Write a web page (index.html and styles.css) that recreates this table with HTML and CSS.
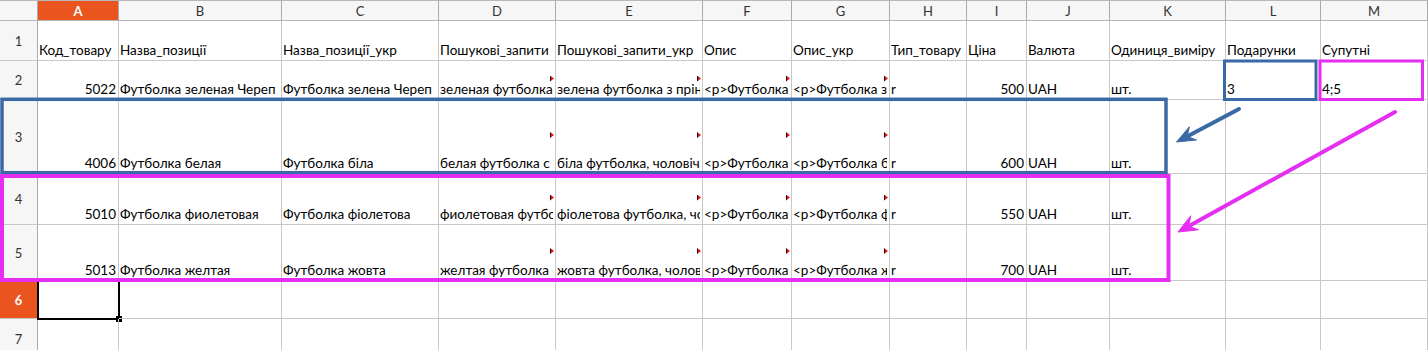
FILE: index.html
```html
<!DOCTYPE html>
<html lang="uk">
<head>
<meta charset="utf-8">
<title>Sheet</title>
<link rel="stylesheet" href="styles.css">
</head>
<body>
<div class="sheet">
  <div class="grid">
    <div class="corner"></div>
    <div class="ch ch-active">A</div>
    <div class="ch">B</div>
    <div class="ch">C</div>
    <div class="ch">D</div>
    <div class="ch">E</div>
    <div class="ch">F</div>
    <div class="ch">G</div>
    <div class="ch">H</div>
    <div class="ch">I</div>
    <div class="ch">J</div>
    <div class="ch">K</div>
    <div class="ch">L</div>
    <div class="ch">M</div>

    <div class="rh">1</div>
    <div class="c"><span class="t">Код_товару</span></div>
    <div class="c"><span class="t">Назва_позиції</span></div>
    <div class="c"><span class="t">Назва_позиції_укр</span></div>
    <div class="c"><span class="t">Пошукові_запити</span></div>
    <div class="c"><span class="t">Пошукові_запити_укр</span></div>
    <div class="c"><span class="t">Опис</span></div>
    <div class="c"><span class="t">Опис_укр</span></div>
    <div class="c"><span class="t">Тип_товару</span></div>
    <div class="c"><span class="t">Ціна</span></div>
    <div class="c"><span class="t">Валюта</span></div>
    <div class="c"><span class="t">Одиниця_виміру</span></div>
    <div class="c"><span class="t">Подарунки</span></div>
    <div class="c"><span class="t">Супутні</span></div>

    <div class="rh">2</div>
    <div class="c num"><span class="t">5022</span></div>
    <div class="c"><span class="t">Футболка зеленая Череп</span></div>
    <div class="c"><span class="t">Футболка зелена Череп</span></div>
    <div class="c"><span class="t">зеленая футболка с принтом</span><i class="note"></i></div>
    <div class="c"><span class="t">зелена футболка з прінтом</span><i class="note"></i></div>
    <div class="c"><span class="t">&lt;p&gt;Футболка зеленая</span><i class="note"></i></div>
    <div class="c"><span class="t">&lt;p&gt;Футболка зелена</span><i class="note"></i></div>
    <div class="c"><span class="t">r</span></div>
    <div class="c num"><span class="t">500</span></div>
    <div class="c"><span class="t">UAH</span></div>
    <div class="c"><span class="t">шт.</span></div>
    <div class="c"><span class="t">3</span></div>
    <div class="c"><span class="t">4;5</span></div>

    <div class="rh">3</div>
    <div class="c num"><span class="t">4006</span></div>
    <div class="c"><span class="t">Футболка белая</span></div>
    <div class="c"><span class="t">Футболка біла</span></div>
    <div class="c"><span class="t">белая футболка с принтом</span><i class="note"></i></div>
    <div class="c"><span class="t">біла футболка, чоловіча</span><i class="note"></i></div>
    <div class="c"><span class="t">&lt;p&gt;Футболка белая</span><i class="note"></i></div>
    <div class="c"><span class="t">&lt;p&gt;Футболка біла</span><i class="note"></i></div>
    <div class="c"><span class="t">r</span></div>
    <div class="c num"><span class="t">600</span></div>
    <div class="c"><span class="t">UAH</span></div>
    <div class="c"><span class="t">шт.</span></div>
    <div class="c"></div>
    <div class="c"></div>

    <div class="rh">4</div>
    <div class="c num"><span class="t">5010</span></div>
    <div class="c"><span class="t">Футболка фиолетовая</span></div>
    <div class="c"><span class="t">Футболка фіолетова</span></div>
    <div class="c"><span class="t">фиолетовая футболка</span><i class="note"></i></div>
    <div class="c"><span class="t">фіолетова футболка, чоловіча</span><i class="note"></i></div>
    <div class="c"><span class="t">&lt;p&gt;Футболка фиолетовая</span><i class="note"></i></div>
    <div class="c"><span class="t">&lt;p&gt;Футболка фіолетова</span><i class="note"></i></div>
    <div class="c"><span class="t">r</span></div>
    <div class="c num"><span class="t">550</span></div>
    <div class="c"><span class="t">UAH</span></div>
    <div class="c"><span class="t">шт.</span></div>
    <div class="c"></div>
    <div class="c"></div>

    <div class="rh">5</div>
    <div class="c num"><span class="t">5013</span></div>
    <div class="c"><span class="t">Футболка желтая</span></div>
    <div class="c"><span class="t">Футболка жовта</span></div>
    <div class="c"><span class="t">желтая футболка с принтом</span><i class="note"></i></div>
    <div class="c"><span class="t">жовта футболка, чоловіча</span><i class="note"></i></div>
    <div class="c"><span class="t">&lt;p&gt;Футболка желтая</span><i class="note"></i></div>
    <div class="c"><span class="t">&lt;p&gt;Футболка жовта</span><i class="note"></i></div>
    <div class="c"><span class="t">r</span></div>
    <div class="c num"><span class="t">700</span></div>
    <div class="c"><span class="t">UAH</span></div>
    <div class="c"><span class="t">шт.</span></div>
    <div class="c"></div>
    <div class="c"></div>

    <div class="rh rh-active">6</div>
    <div class="c"><div class="sel"><i class="handle"></i></div></div>
    <div class="c"></div><div class="c"></div><div class="c"></div><div class="c"></div>
    <div class="c"></div><div class="c"></div><div class="c"></div><div class="c"></div>
    <div class="c"></div><div class="c"></div><div class="c"></div><div class="c"></div>

    <div class="rh">7</div>
    <div class="c"></div><div class="c"></div><div class="c"></div><div class="c"></div>
    <div class="c"></div><div class="c"></div><div class="c"></div><div class="c"></div>
    <div class="c"></div><div class="c"></div><div class="c"></div><div class="c"></div>
    <div class="c"></div>
  </div>

  <svg class="annot" width="1428" height="350" viewBox="0 0 1428 350" aria-hidden="true">
    <g fill="none" stroke="#3b69a6">
      <rect x="1224.5" y="61" width="91.5" height="38.5" stroke-width="3"/>
      <rect x="2" y="99.3" width="1164" height="73.4" stroke-width="3.5"/>
    </g>
    <g fill="none" stroke="#e42ff2">
      <rect x="1320" y="61" width="102.5" height="38.5" stroke-width="3"/>
      <rect x="2" y="176" width="1166.5" height="104" stroke-width="4"/>
    </g>
    <line x1="1239" y1="109" x2="1188" y2="136" stroke="#3b69a6" stroke-width="4" stroke-linecap="round"/>
    <polygon points="1176.5,142 1189.4,126.8 1187.1,136.4 1196.4,140" fill="#3b69a6" stroke="#3b69a6" stroke-width="1" stroke-linejoin="round"/>
    <line x1="1395" y1="112" x2="1189" y2="226" stroke="#e42ff2" stroke-width="4" stroke-linecap="round"/>
    <polygon points="1178,232 1190.7,215.8 1188.5,226.2 1198.5,229.8" fill="#e42ff2" stroke="#e42ff2" stroke-width="1" stroke-linejoin="round"/>
  </svg>
</div>
</body>
</html>
```

FILE: styles.css
```css
html, body {
  margin: 0;
  padding: 0;
  background: #ffffff;
}
body {
  width: 1428px;
  height: 350px;
  overflow: hidden;
  font-family: Lato, "Noto Sans", sans-serif;
  font-size: 13.5px;
  color: #000;
}
.sheet {
  position: relative;
  width: 1428px;
  height: 350px;
  overflow: hidden;
}
.grid {
  display: grid;
  grid-template-columns: 38px 81px 163px 157px 117px 147px 89px 98px 77px 60px 83px 116px 95px 1fr;
  grid-template-rows: 21px 40px 39px 74px 51px 56px 38px 40px;
}
.corner,
.ch,
.rh {
  background: #f6f6f6;
  box-sizing: border-box;
  border-right: 1px solid #ababab;
  border-bottom: 1px solid #b4b4b4;
  color: #333;
  font-size: 13px;
  display: flex;
  align-items: center;
  justify-content: center;
}
.corner,
.ch {
  border-top: 1px solid #b8b8b8;
}
.rh {
  border-bottom-color: #c8c8c8;
}
.ch-active,
.rh-active {
  background: #e9541f;
  color: #fff;
  font-weight: bold;
}
.c {
  position: relative;
  box-sizing: border-box;
  border-right: 1px solid #c8c8c8;
  border-bottom: 1px solid #c8c8c8;
  display: flex;
  align-items: flex-end;
  padding: 0 2px 1px 1px;
  line-height: 17px;
}
.t {
  flex: 1;
  min-width: 0;
  overflow: hidden;
  white-space: nowrap;
}
.num .t {
  text-align: right;
}
.note {
  position: absolute;
  right: 1px;
  top: calc(50% - 4.5px);
  width: 4px;
  height: 6px;
  background: linear-gradient(to right, #3a0000 1px, #e01010 1px);
  clip-path: polygon(0 0, 100% 50%, 0 100%);
}
.sel {
  position: absolute;
  left: -1px;
  top: -2px;
  right: -2px;
  bottom: -2px;
  border: 2px solid #000;
}
.handle {
  position: absolute;
  right: -4px;
  bottom: -4px;
  width: 6px;
  height: 6px;
  background: #000;
}
.annot {
  position: absolute;
  left: 0;
  top: 0;
  pointer-events: none;
}
```
